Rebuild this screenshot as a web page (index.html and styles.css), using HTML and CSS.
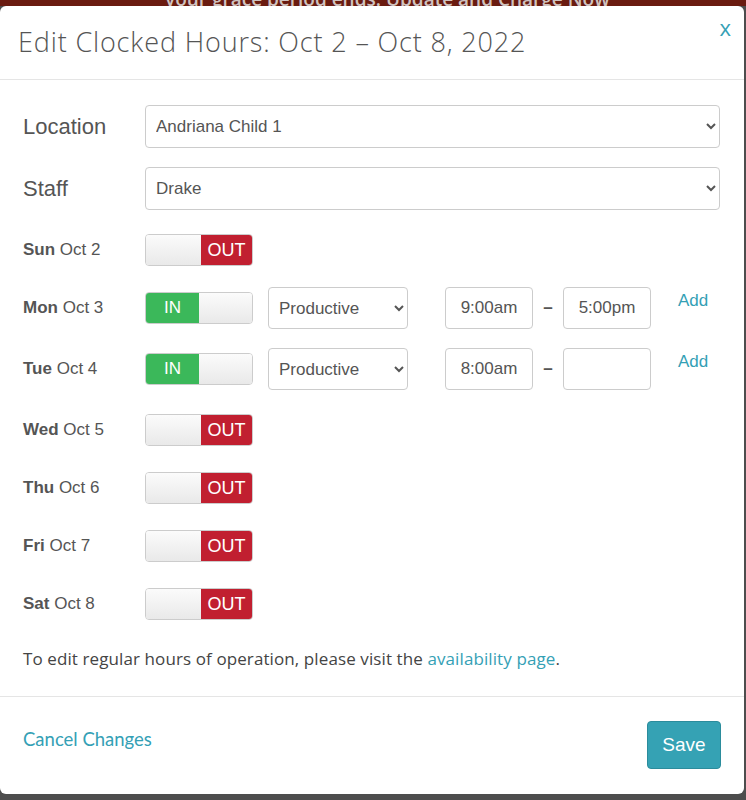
FILE: index.html
```html
<!DOCTYPE html>
<html>
<head>
<meta charset="utf-8">
<link rel="stylesheet" href="styles.css">
</head>
<body>
<div class="banner"><div class="banner-text">your grace period ends. Update and Charge Now</div></div>
<div class="modal">
  <div class="modal-header">
    <h1 class="modal-title">Edit Clocked Hours: Oct 2 – Oct 8, 2022</h1>
    <a class="close">x</a>
  </div>
  <div class="modal-body">
    <div class="field-row">
      <label class="big-label">Location</label>
      <select class="big-select"><option>Andriana Child 1</option></select>
    </div>
    <div class="field-row">
      <label class="big-label">Staff</label>
      <select class="big-select"><option>Drake</option></select>
    </div>

    <div class="day-row">
      <div class="day-label"><b>Sun</b> Oct 2</div>
      <div class="toggle off"><span class="knob"></span><span class="state out">OUT</span></div>
    </div>
    <div class="day-row has-inputs">
      <div class="day-label"><b>Mon</b> Oct 3</div>
      <div class="toggle on"><span class="state in">IN</span><span class="knob"></span></div>
      <select class="type-select"><option>Productive</option></select>
      <input class="time" type="text" value="9:00am">
      <span class="dash">–</span>
      <input class="time" type="text" value="5:00pm">
      <a class="add">Add</a>
    </div>
    <div class="day-row has-inputs">
      <div class="day-label"><b>Tue</b> Oct 4</div>
      <div class="toggle on"><span class="state in">IN</span><span class="knob"></span></div>
      <select class="type-select"><option>Productive</option></select>
      <input class="time" type="text" value="8:00am">
      <span class="dash">–</span>
      <input class="time" type="text" value="">
      <a class="add">Add</a>
    </div>
    <div class="day-row">
      <div class="day-label"><b>Wed</b> Oct 5</div>
      <div class="toggle off"><span class="knob"></span><span class="state out">OUT</span></div>
    </div>
    <div class="day-row">
      <div class="day-label"><b>Thu</b> Oct 6</div>
      <div class="toggle off"><span class="knob"></span><span class="state out">OUT</span></div>
    </div>
    <div class="day-row">
      <div class="day-label"><b>Fri</b> Oct 7</div>
      <div class="toggle off"><span class="knob"></span><span class="state out">OUT</span></div>
    </div>
    <div class="day-row">
      <div class="day-label"><b>Sat</b> Oct 8</div>
      <div class="toggle off"><span class="knob"></span><span class="state out">OUT</span></div>
    </div>

    <p class="note">To edit regular hours of operation, please visit the <a class="link">availability page</a>.</p>
  </div>
  <div class="modal-footer">
    <a class="cancel">Cancel Changes</a>
    <button class="save">Save</button>
  </div>
</div>
</body>
</html>
```

FILE: styles.css
```css
* { box-sizing: border-box; }
html, body { margin: 0; padding: 0; }
body {
  background: #4d4d4d;
  width: 746px;
  height: 800px;
  overflow: hidden;
  font-family: "Liberation Sans", Arial, sans-serif;
  color: #555;
}
.banner {
  height: 6px;
  background: #6a1b10;
  overflow: hidden;
}
.banner-text {
  margin-top: -12px;
  margin-left: 165px;
  font-family: "Open Sans", sans-serif;
  font-weight: 600;
  font-size: 19px;
  line-height: 22px;
  color: #cfc3c0;
}
.modal {
  width: 744px;
  height: 788px;
  background: #fff;
  border-radius: 6px;
  display: flex;
  flex-direction: column;
}
.modal-header {
  height: 74px;
  border-bottom: 1px solid #e5e5e5;
  display: flex;
  justify-content: space-between;
  align-items: flex-start;
  padding: 0 13px 0 18px;
}
.modal-title {
  margin: 20px 0 0 0;
  font-family: "Open Sans", sans-serif;
  font-weight: 300;
  font-size: 27px;
  letter-spacing: 0.85px;
  line-height: 32px;
  color: #555;
}
.close {
  margin-top: 8px;
  font-family: "Open Sans", sans-serif;
  font-size: 22px;
  line-height: 26px;
  color: #34a0b5;
}
.modal-body {
  flex: 1;
  padding: 25px 24px 0 23px;
}
.field-row {
  display: flex;
  align-items: center;
  margin-bottom: 19px;
}
.big-label {
  width: 122px;
  font-size: 22px;
  color: #555;
}
.big-select {
  flex: 1;
  height: 43px;
  font-family: "Liberation Sans", Arial, sans-serif;
  font-size: 17px;
  color: #555;
  background: #fff;
  border: 1px solid #ccc;
  border-radius: 4px;
  padding: 0 6px;
}
.day-row {
  display: flex;
  align-items: flex-start;
  height: 42px;
  margin-bottom: 16px;
}
.day-row.has-inputs { height: 45px; }
.day-label {
  width: 122px;
  font-size: 17px;
  line-height: 42px;
  color: #555;
}
.day-label b { font-weight: 700; }
.toggle {
  margin-top: 5px;
  width: 108px;
  height: 32px;
  border: 1px solid #ccc;
  border-radius: 4px;
  overflow: hidden;
  display: flex;
}
.knob {
  flex: 1;
  background: linear-gradient(#fbfbfb, #e9e9e9);
}
.state {
  width: 51px;
  color: #fff;
  font-size: 18px;
  line-height: 30px;
  text-align: center;
}
.state.out { background: #c11f30; }
.state.in { width: 53px; background: #3bb85a; font-size: 17px; }
.type-select {
  margin-left: 15px;
  width: 140px;
  height: 42px;
  font-family: "Liberation Sans", Arial, sans-serif;
  font-size: 17px;
  color: #555;
  background: #fff;
  border: 1px solid #ccc;
  border-radius: 4px;
  padding: 0 6px;
}
.time {
  width: 88px;
  height: 42px;
  border: 1px solid #ccc;
  border-radius: 4px;
  font-family: "Liberation Sans", Arial, sans-serif;
  font-size: 17px;
  color: #555;
  text-align: center;
  padding: 0;
}
.type-select + .time { margin-left: 37px; }
.dash {
  width: 30px;
  text-align: center;
  font-size: 17px;
  line-height: 42px;
  font-weight: 700;
  color: #555;
}
.add {
  margin-left: 27px;
  margin-top: 3px;
  font-size: 17px;
  line-height: 22px;
  color: #34a0b5;
}
.note {
  margin: 22px 0 0 0;
  font-family: "Open Sans", sans-serif;
  font-size: 17px;
  letter-spacing: 0.1px;
  line-height: 24px;
  color: #444;
}
.link { color: #34a0b5; }
.modal-footer {
  height: 98px;
  border-top: 1px solid #e5e5e5;
  display: flex;
  justify-content: space-between;
  align-items: flex-start;
  padding: 24px 23px 0 23px;
}
.cancel {
  margin-top: 7px;
  font-family: Lato, sans-serif;
  font-size: 18.5px;
  line-height: 22px;
  color: #34a0b5;
}
.save {
  width: 74px;
  height: 48px;
  background: #35a2b4;
  border: 1px solid #2b8c9c;
  border-radius: 4px;
  color: #fff;
  font-family: "Liberation Sans", Arial, sans-serif;
  font-size: 19px;
  padding: 0;
}
```
